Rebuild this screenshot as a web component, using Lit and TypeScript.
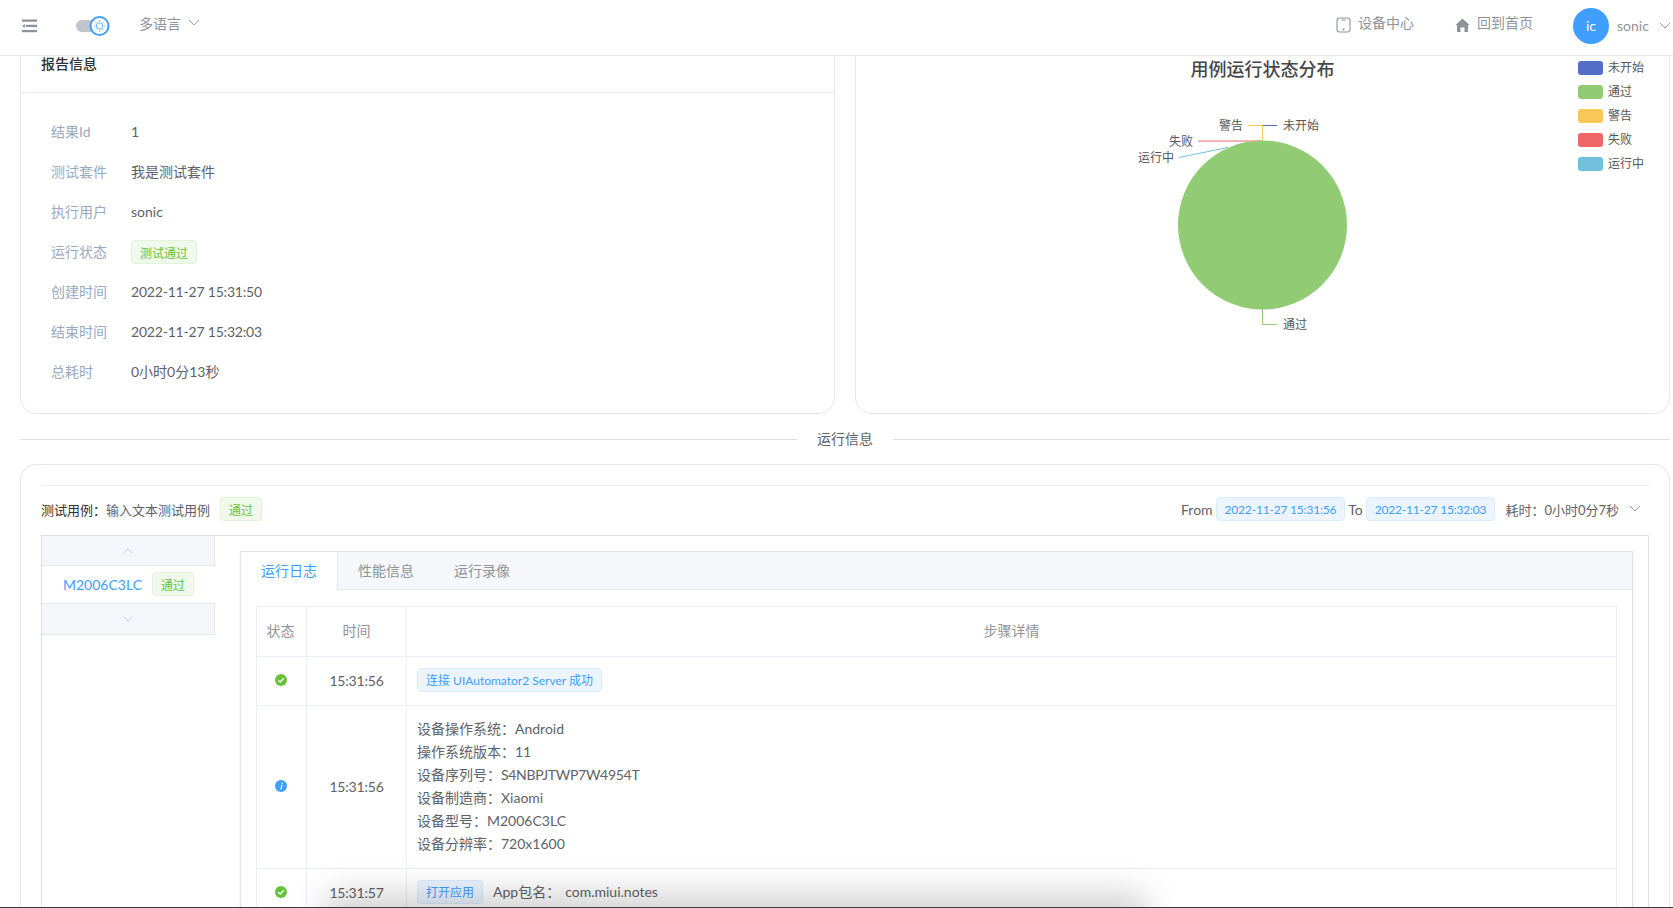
import { LitElement, html, css, svg } from "lit";
import { customElement } from "lit/decorators.js";

const chevron = (cls: string, up = false) => html`<svg class=${cls} viewBox="0 0 12 8" fill="none" stroke="currentColor" stroke-width="0.9"><path d=${up ? "M1 7 L6 2 L11 7" : "M1 1 L6 6 L11 1"}/></svg>`;
const num = (t: string) => html`<span class="num">${t}</span>`;

const info: [string, unknown][] = [
  ["结果Id", "1"],
  ["测试套件", "我是测试套件"],
  ["执行用户", "sonic"],
  ["运行状态", html`<span class="tag green low">测试通过</span>`],
  ["创建时间", num("2022-11-27 15:31:50")],
  ["结束时间", num("2022-11-27 15:32:03")],
  ["总耗时", "0小时0分13秒"],
];

const legend: [string, string][] = [
  ["未开始", "#5470c6"],
  ["通过", "#91cc75"],
  ["警告", "#fac858"],
  ["失败", "#ee6666"],
  ["运行中", "#73c0de"],
];

const ok = html`<svg class="st" viewBox="0 0 12 12"><circle cx="6" cy="6" r="6" fill="#67c23a"/><path d="M3.2 6.2 L5.2 8 L8.8 4.3" fill="none" stroke="#fff" stroke-width="1.3"/></svg>`;
const inf = html`<svg class="st" viewBox="0 0 12 12"><circle cx="6" cy="6" r="6" fill="#409eff"/><path d="M6.8 2.4 h1.2 l-.25 1.3 h-1.2 z M6.3 4.8 h1.2 l-.9 4.8 h-1.2 z" fill="#fff"/></svg>`;

@customElement("app-root")
export class AppRoot extends LitElement {
  static styles = css`
    :host { display: block; width: 1673px; height: 908px; overflow: hidden; background: #fff; font-family: Lato, "Noto Sans CJK SC", sans-serif; font-size: 14px; color: #606266; position: relative; }
    * { box-sizing: border-box; }
    .num { letter-spacing: -.2px; }
    .top { height: 56px; border-bottom: 1px solid #e6e6e6; display: flex; align-items: center; padding: 0 0 4px 22px; color: #909399; position: relative; z-index: 2; background: #fff; }
    .burger { width: 15px; height: 14px; }
    .toggle { width: 36px; height: 20px; margin-left: 38px; margin-top: 1px; }
    .lang { margin-left: 28px; margin-top: -5px; }
    .chev { width: 12px; height: 8px; color: #909399; }
    .lang + .chev { margin-left: 7px; margin-top: -5px; }
    .spacer { flex: 1; }
    .nav { display: flex; align-items: center; gap: 7px; margin-top: -7px; }
    .nav svg { width: 15px; height: 16px; margin-top: 5px; }
    .nav.home { margin-left: 41px; }
    .avatar { width: 36px; height: 36px; border-radius: 50%; background: #409eff; color: #fff; display: flex; align-items: center; justify-content: center; margin-left: 40px; }
    .user { margin-left: 8px; width: 42px; }
    .top > .chev.last { margin-right: 2px; }

    main { padding: 0 3px 0 20px; margin-top: -19px; }
    .cards { display: flex; gap: 20px; }
    .card { border: 1px solid #e4e7ed; border-radius: 16px; background: #fff; }
    .cards .card { flex: 1; height: 377px; position: relative; }
    .card-h { height: 55px; padding: 0 20px 4px; border-bottom: 1px solid #e4e7ed; color: #303133; display: flex; align-items: center; font-weight: 500; }
    .rows { padding: 18px 0 0 30px; }
    .row { height: 40px; display: flex; align-items: center; }
    .row .k { width: 80px; color: #99a9bf; }
    .row .v { color: #606266; }
    .tag { display: inline-flex; align-items: center; height: 24px; padding: 0 8px; border-radius: 4px; font-size: 12px; border: 1px solid; white-space: nowrap; }
    .tag.low { margin-top: 2px; }
    .tag.green { background: #f0f9eb; border-color: #e1f3d8; color: #67c23a; }
    .tag.blue { background: #ecf5ff; border-color: #d9ecff; color: #409eff; }
    .chart { position: absolute; left: -1px; top: -1px; width: 815px; height: 377px; }
    .chart text { font-family: inherit; font-size: 12px; fill: #555; }
    .chart text.title { font-size: 18px; font-weight: 500; fill: #464646; }

    .divider { display: flex; align-items: center; height: 50px; gap: 20px; color: #606266; }
    .divider span { margin-top: -2px; }
    .divider i { flex: 1; height: 1px; background: #dcdfe6; }
    .run { height: 600px; padding: 20px 20px 0; border-bottom: 0; }
    .hr { height: 1px; background: #ebeef5; }
    .case { height: 49px; padding-bottom: 3px; display: flex; align-items: center; font-size: 13px; color: #606266; }
    .case .name { color: #303133; }
    .case > .tag { margin-left: 10px; }
    .case .r { margin-left: auto; display: flex; align-items: center; gap: 3px; color: #606266; font-size: 14px; }
    .case .r .chev { margin-left: 7px; margin-right: 8px; }
    .case .dur { margin-left: 7px; font-size: 13px; }
    .box { border: 1px solid #dcdfe6; display: flex; height: 400px; }
    .side { width: 173px; flex: none; }
    .arrow { height: 30px; background: #f4f6fa; border-right: 1px solid #e4e7ed; border-bottom: 1px solid #e4e7ed; display: flex; align-items: center; justify-content: center; color: #b4bccc; }
    .arrow.dn { height: 31px; }
    .arrow svg { width: 10px; height: 7px; }
    .item { height: 38px; display: flex; align-items: center; padding-left: 21px; padding-bottom: 1px; color: #409eff; gap: 10px; border-bottom: 1px solid #e4e7ed; }
    .pane { flex: 1; margin: 15px 15px 0 25px; border: 1px solid #dfe4ed; border-bottom: 0; box-shadow: 0 2px 4px rgba(0,0,0,.08); min-width: 0; }
    .tabs { height: 38px; padding-bottom: 2px; background: #f5f7fa; border-bottom: 1px solid #e4e7ed; display: flex; align-items: center; color: #909399; }
    .tab { padding: 0 20px; }
    .tab.on { background: #fff; color: #409eff; width: 97px; padding: 0 20px 2px; border-right: 1px solid #dfe4ed; height: 38px; margin-top: 1px; display: flex; align-items: center; margin-bottom: -1px; }
    .tbl-wrap { padding: 16px 15px 15px; }
    table { width: 100%; border-collapse: collapse; table-layout: fixed; border: 1px solid #ebeef5; }
    th, td { border: 1px solid #ebeef5; padding: 0 0 2px; text-align: center; color: #606266; font-weight: 400; }
    th { height: 50px; color: #909399; padding-bottom: 4px; }
    th:first-child { padding-right: 2px; }
    td.l { text-align: left; padding-left: 10px; line-height: 23px; }
    td.l .line { height: 23px; }
    .st { width: 12px; height: 12px; display: block; margin-left: 18px; }
    .app { margin-left: 10px; }
    .pkg { margin-left: 5px; }
    .shade { position: absolute; left: 320px; width: 830px; bottom: -32px; height: 48px; border-radius: 30px; background: rgba(0,0,0,.17); filter: blur(16px); pointer-events: none; }
    .edge { position: absolute; left: 0; right: 0; bottom: 0; height: 1px; background: #3a3a3a; }
  `;

  render() {
    return html`
      <header class="top">
        <svg class="burger" viewBox="0 0 15 14" fill="#8c9099"><rect x="0" y="0.5" width="15" height="2.2"/><rect x="4" y="5.8" width="11" height="2.2"/><path d="M0 6.9 L3 5 V8.8 Z"/><rect x="0" y="11" width="15" height="2.2"/></svg>
        <svg class="toggle" viewBox="0 0 36 20"><rect x="1" y="4" width="26" height="12" rx="6" fill="#c0c4cc"/><circle cx="24.5" cy="10" r="9" fill="#fff" stroke="#409eff" stroke-width="2"/><circle cx="24.5" cy="10" r="3.2" fill="none" stroke="#409eff" stroke-width=".8"/><path d="M24.5 4.2v1.6M24.5 14.2v1.6M18.7 10h1.6M28.7 10h1.6M20.4 5.9l1.1 1.1M27.5 13l1.1 1.1M20.4 14.1l1.1-1.1M27.5 7l1.1-1.1" stroke="#409eff" stroke-width=".7"/></svg>
        <span class="lang">多语言</span>
        ${chevron("chev")}
        <span class="spacer"></span>
        <span class="nav"><svg viewBox="0 0 15 16" fill="none" stroke="#909399" stroke-width="1.1"><rect x="1" y="1" width="13" height="14" rx="2.5"/><path d="M5.5 3h4"/><circle cx="7.5" cy="12.5" r=".5"/></svg>设备中心</span>
        <span class="nav home"><svg viewBox="0 0 15 16" fill="#909399"><path d="M7.5 1.5 L14.5 8 H13 V15 H9.5 V10.5 H5.5 V15 H2 V8 H.5 Z"/></svg>回到首页</span>
        <span class="avatar">ic</span>
        <span class="user">sonic</span>
        ${chevron("chev last")}
      </header>
      <main>
        <div class="cards">
          <section class="card">
            <div class="card-h">报告信息</div>
            <div class="rows">
              ${info.map(([k, v]) => html`<div class="row"><span class="k">${k}</span><span class="v">${v}</span></div>`)}
            </div>
          </section>
          <section class="card">
            ${this.chart()}
          </section>
        </div>
        <div class="divider"><i></i><span>运行信息</span><i></i></div>
        <section class="card run">
          <div class="hr"></div>
          <div class="case">
            <span><span class="name">测试用例：</span>输入文本测试用例</span><span class="tag green">通过</span>
            <span class="r">From <span class="tag blue num">2022-11-27 15:31:56</span> To <span class="tag blue num">2022-11-27 15:32:03</span><span class="dur">耗时：0小时0分7秒</span>${chevron("chev")}</span>
          </div>
          <div class="box">
            <div class="side">
              <div class="arrow">${chevron("", true)}</div>
              <div class="item">M2006C3LC <span class="tag green">通过</span></div>
              <div class="arrow dn">${chevron("")}</div>
            </div>
            <div class="pane">
              <div class="tabs"><span class="tab on">运行日志</span><span class="tab">性能信息</span><span class="tab">运行录像</span></div>
              <div class="tbl-wrap">
                <table>
                  <colgroup><col style="width:50px"/><col style="width:100px"/><col/></colgroup>
                  <thead><tr><th>状态</th><th>时间</th><th>步骤详情</th></tr></thead>
                  <tbody>
                    <tr style="height:49px"><td>${ok}</td><td>${num("15:31:56")}</td><td class="l"><span class="tag blue">连接 UIAutomator2 Server 成功</span></td></tr>
                    <tr style="height:163px"><td>${inf}</td><td>${num("15:31:56")}</td><td class="l">
                      <div class="line">设备操作系统：Android</div>
                      <div class="line">操作系统版本：11</div>
                      <div class="line">设备序列号：<span style="letter-spacing:-.3px">S4NBPJTWP7W4954T</span></div>
                      <div class="line">设备制造商：Xiaomi</div>
                      <div class="line">设备型号：M2006C3LC</div>
                      <div class="line">设备分辨率：720x1600</div>
                    </td></tr>
                    <tr style="height:49px"><td>${ok}</td><td>${num("15:31:57")}</td><td class="l"><span class="tag blue">打开应用</span><span class="app">App包名：</span><span class="pkg">com.miui.notes</span></td></tr>
                  </tbody>
                </table>
              </div>
            </div>
          </div>
        </section>
      </main>
      <div class="shade"></div>
      <div class="edge"></div>
    `;
  }

  chart() {
    const ox = 855, oy = 37;
    const X = (x: number) => x - ox;
    const Y = (y: number) => y - oy;
    return html`<svg class="chart" viewBox="0 0 815 377">
      ${svg`
      <text class="title" x=${X(1262.5)} y=${Y(76)} text-anchor="middle">用例运行状态分布</text>
      ${legend.map(([t, c], i) => svg`
        <rect x=${X(1578)} y=${Y(61 + i * 24)} width="25" height="14" rx="3" fill=${c}/>
        <text x=${X(1608)} y=${Y(72 + i * 24)}>${t}</text>`)}
      <polyline points="${X(1262.5)},${Y(140)} ${X(1262.5)},${Y(125.5)} ${X(1277)},${Y(125.5)}" fill="none" stroke="#5470c6"/>
      <polyline points="${X(1262.5)},${Y(140)} ${X(1262.5)},${Y(125.5)} ${X(1248)},${Y(125.5)}" fill="none" stroke="#fac858"/>
      <polyline points="${X(1262)},${Y(141)} ${X(1198)},${Y(141)}" fill="none" stroke="#ee6666"/>
      <polyline points="${X(1228)},${Y(147.5)} ${X(1179)},${Y(157.5)}" fill="none" stroke="#73c0de"/>
      <polyline points="${X(1262.5)},${Y(309)} ${X(1262.5)},${Y(324.5)} ${X(1277)},${Y(324.5)}" fill="none" stroke="#91cc75"/>
      <circle cx=${X(1262.5)} cy=${Y(225)} r="84.5" fill="#91cc75"/>
      <text x=${X(1283)} y=${Y(130)}>未开始</text>
      <text x=${X(1243)} y=${Y(130)} text-anchor="end">警告</text>
      <text x=${X(1193)} y=${Y(146)} text-anchor="end">失败</text>
      <text x=${X(1174)} y=${Y(162)} text-anchor="end">运行中</text>
      <text x=${X(1283)} y=${Y(329)}>通过</text>
      `}
    </svg>`;
  }
}
